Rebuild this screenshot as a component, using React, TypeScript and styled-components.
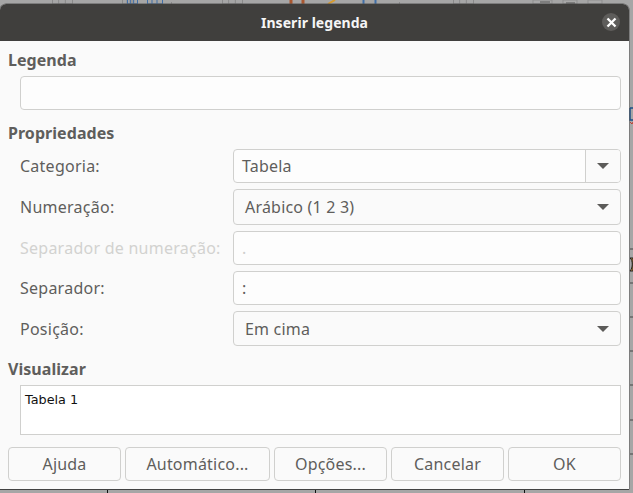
import React from "react";
import styled, { createGlobalStyle } from "styled-components";

const Global = createGlobalStyle`
  html, body { margin: 0; padding: 0; width: 633px; height: 493px; overflow: hidden; background: #a6a6a6; }
  body { font-family: "Noto Sans", "Open Sans", sans-serif; }
`;

const Page = styled.div`
  position: relative;
  width: 633px;
  height: 493px;
  padding-top: 4px;
  box-sizing: border-box;
  background: #a6a6a6;
  overflow: hidden;
`;

const Backdrop = styled.svg`
  position: absolute;
  left: 0;
  top: 0;
`;

const Dialog = styled.div`
  position: relative;
  width: 629px;
  height: 485px;
  display: flex;
  flex-direction: column;
  background: #fafafa;
  border-radius: 6px 6px 0 0;
  box-shadow: 0 0 0 0.5px #555, 0 1px 0 #333;
  overflow: hidden;
`;

const Header = styled.div`
  position: relative;
  height: 37px;
  flex: none;
  display: flex;
  align-items: center;
  justify-content: center;
  background: #403f3d;
  color: #f5f5f5;
  font-size: 14px;
  font-weight: 700;
`;

const Title = styled.span`
  position: relative;
  letter-spacing: 0.05px;
`;

const CloseButton = styled.div`
  position: absolute;
  left: 602px;
  top: 9px;
  width: 18px;
  height: 18px;
  border-radius: 50%;
  background: #5e5d5b;
  display: flex;
  align-items: center;
  justify-content: center;
`;

const Body = styled.div`
  flex: 1;
  display: flex;
  flex-direction: column;
  padding: 10px 8px 0;
`;

const Heading = styled.div<{ $top?: number }>`
  height: 19px;
  line-height: 19px;
  margin-top: ${(p) => p.$top ?? 0}px;
  margin-bottom: 6px;
  font-size: 16px;
  font-weight: 700;
  color: #5f5e5c;
  letter-spacing: 0.05px;
`;

const Indented = styled.div`
  margin-left: 12px;
`;

const Field = styled.div<{ $h?: number; $pad?: number; $muted?: boolean }>`
  box-sizing: border-box;
  height: ${(p) => p.$h ?? 34}px;
  display: flex;
  align-items: center;
  padding-left: ${(p) => p.$pad ?? 8}px;
  background: #fdfdfd;
  border: 1px solid #d0d0ce;
  border-radius: 4px;
  font-size: 16px;
  color: ${(p) => (p.$muted ? "#cfcfcd" : "#5f5e5c")};
`;

const FieldText = styled.span`
  flex: 1;
  letter-spacing: 0.2px;
`;

const Arrow = styled.svg`
  flex: none;
  margin-right: 11px;
`;

const ArrowCell = styled.div`
  flex: none;
  width: 34px;
  align-self: stretch;
  display: flex;
  align-items: center;
  justify-content: center;
  border-left: 1px solid #d0d0ce;
  background: #fafafa;
  border-radius: 0 3px 3px 0;
`;

const SelectField = styled(Field)`
  background: #fafafa;
`;

const Form = styled.div`
  display: grid;
  grid-template-columns: 213px 388px;
  row-gap: 6px;
  align-items: center;
`;

const Label = styled.div<{ $muted?: boolean }>`
  font-size: 16px;
  letter-spacing: 0.25px;
  white-space: nowrap;
  color: ${(p) => (p.$muted ? "#d2d2d0" : "#5f5e5c")};
`;

const Preview = styled.div`
  box-sizing: border-box;
  height: 50px;
  padding: 6px 4px;
  background: #fff;
  border: 1px solid #d0d0ce;
  font-family: "DejaVu Sans", sans-serif;
  font-size: 12.8px;
  line-height: 16px;
  color: #111;
`;

const Actions = styled.div`
  display: flex;
  gap: 4px;
  margin-top: 12px;
`;

const ActionButton = styled.button<{ $w: number }>`
  box-sizing: border-box;
  width: ${(p) => p.$w}px;
  height: 34px;
  padding: 0;
  background: #fafafa;
  border: 1px solid #d0d0ce;
  border-radius: 4px;
  font-family: inherit;
  font-size: 16px;
  letter-spacing: 0.2px;
  color: #5f5e5c;
`;

const DownArrow = () => (
  <svg width="12" height="6" viewBox="0 0 12 6">
    <path d="M0 0H12L6 6Z" fill="#5c5b59" />
  </svg>
);

const SelectArrow = () => (
  <Arrow width="12" height="6" viewBox="0 0 12 6">
    <path d="M0 0H12L6 6Z" fill="#5c5b59" />
  </Arrow>
);

const topCells = [
  { x: 52, w: 20, c: "#8a8a8a" },
  { x: 122, w: 15, c: "#8a8a8a" },
  { x: 127, w: 10, c: "#3f6ea8" },
  { x: 147, w: 15, c: "#3f6ea8" },
  { x: 222, w: 20, c: "#8a8a8a" },
  { x: 453, w: 20, c: "#8a8a8a" },
];

export default function App() {
  return (
    <Page>
      <Global />
      <Backdrop width="633" height="493" viewBox="0 0 633 493">
        {topCells.map((t) => (
          <g key={t.x} stroke={t.c} fill="none">
            <rect x={t.x + 0.5} y="-2" width={t.w} height="6" />
            <path d={`M${t.x + t.w / 3} 0V4M${t.x + (2 * t.w) / 3} 0V4`} />
          </g>
        ))}
        <path d="M291 0V4M303 0V4" stroke="#a9572f" strokeWidth="3" />
        <path d="M328 4L335 0" stroke="#d69a2c" strokeWidth="2" />
        <path d="M363.5 0V4M375.5 0V4" stroke="#3f6ea8" strokeWidth="2" />
        <path d="M171.5 2V4M399.5 2V4" stroke="#8a8a8a" />
        <path d="M533 0H552V4H533ZM563 0H577V4H563ZM588 0H602V4H588Z" stroke="#8f8f8f" fill="#a8a8a8" />
        <path d="M540 2H550M566 3H575" stroke="#555" />
        <path d="M630 108V120H633M630 108H633" stroke="#1d4f86" strokeWidth="1.5" fill="none" />
        <path d="M630 122L632 124L633 122" stroke="#c0392b" fill="none" />
        <path d="M630 249H633M630 283H633M630 317H633M630 351H633M630 385H633M630 420H633M630 454H633" stroke="#666" strokeWidth="1.5" />
        <path d="M630 258C633 260 633 268 630 271H633V258Z" stroke="#222" strokeWidth="1" fill="#c08a3a" />
        <path d="M107.5 489V493M315.5 489V493M524.5 489V493" stroke="#111" />
      </Backdrop>
      <Dialog>
        <Header>
          <Title>Inserir legenda</Title>
          <CloseButton>
            <svg width="11" height="11" viewBox="0 0 11 11">
              <path d="M1.5 1.5L9.5 9.5M9.5 1.5L1.5 9.5" stroke="#fff" strokeWidth="2.3" />
            </svg>
          </CloseButton>
        </Header>
        <Body>
          <Heading>Legenda</Heading>
          <Indented>
            <Field />
          </Indented>
          <Heading $top={14}>Propriedades</Heading>
          <Indented>
            <Form>
              <Label>Categoria:</Label>
              <Field>
                <FieldText>Tabela</FieldText>
                <ArrowCell>
                  <DownArrow />
                </ArrowCell>
              </Field>
              <Label>Numeração:</Label>
              <SelectField $h={36} $pad={11}>
                <FieldText>Arábico (1 2 3)</FieldText>
                <SelectArrow />
              </SelectField>
              <Label $muted>Separador de numeração:</Label>
              <Field $muted>
                <FieldText>.</FieldText>
              </Field>
              <Label>Separador:</Label>
              <Field>
                <FieldText>:</FieldText>
              </Field>
              <Label>Posição:</Label>
              <SelectField $h={35} $pad={11}>
                <FieldText>Em cima</FieldText>
                <SelectArrow />
              </SelectField>
            </Form>
          </Indented>
          <Heading $top={14}>Visualizar</Heading>
          <Indented>
            <Preview>Tabela 1</Preview>
          </Indented>
          <Actions>
            <ActionButton $w={113}>Ajuda</ActionButton>
            <ActionButton $w={145}>Automático...</ActionButton>
            <ActionButton $w={113}>Opções...</ActionButton>
            <ActionButton $w={113}>Cancelar</ActionButton>
            <ActionButton $w={113}>OK</ActionButton>
          </Actions>
        </Body>
      </Dialog>
    </Page>
  );
}
